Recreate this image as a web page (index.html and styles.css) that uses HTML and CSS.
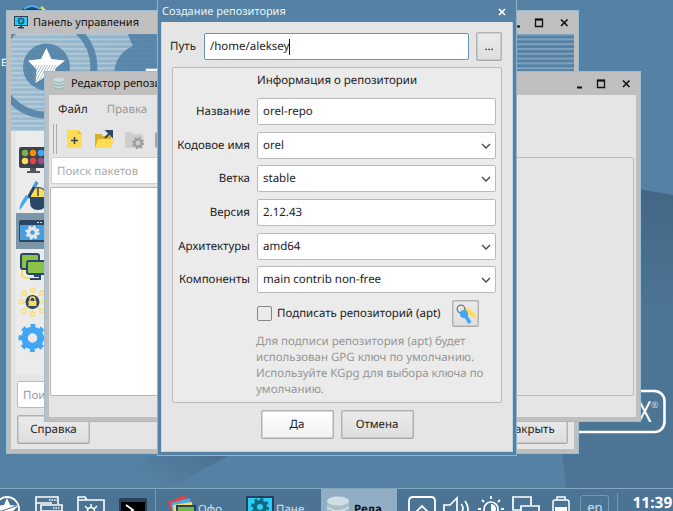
FILE: index.html
```html
<!DOCTYPE html>
<html lang="ru">
<head>
<meta charset="utf-8">
<title>Создание репозитория</title>
<link rel="stylesheet" href="styles.css">
</head>
<body>
<main class="desktop">
  <svg class="wallpaper" viewBox="0 0 673 511">
    <defs>
      <linearGradient id="shade" x1="0" y1="0" x2="0" y2="1"><stop offset="0" stop-color="#426483"/><stop offset=".45" stop-color="#4d7696"/><stop offset="1" stop-color="#4c7495"/></linearGradient>
      <linearGradient id="ray" x1="1" y1="0" x2="0.2" y2="0.3"><stop offset="0" stop-color="#4a7090"/><stop offset="1" stop-color="#5582a4"/></linearGradient>
    </defs>
    <path d="M520 168L673 195V511H569L556 400z" fill="url(#shade)"/>
    <path d="M228 456L170 488H100L150 456z" fill="url(#ray)"/>
    <rect x="480" y="391" width="184.500" height="41" rx="10" fill="none" stroke="#fff" stroke-width="2.600"/>
    <circle cx="32" cy="22" r="16" fill="#28415f"/>
    <path d="M24 9q8-6 16 0" fill="none" stroke="#4fb0f0" stroke-width="2"/>
    <path d="M41 7l4 4" stroke="#e8d25a" stroke-width="3"/>
  </svg>
  <span class="desk-label">Е</span>
  <span class="brand">X</span><span class="brand-mark">®</span>

  <section class="window panel">
    <header class="titlebar">
      <svg class="title-icon" viewBox="0 0 14 13"><path d="M0 0h14v10H0z" fill="#29405b"/><path d="M1 1h12v8H1z" fill="#29cdf5"/><circle cx="7" cy="5" r="2.300" fill="none" stroke="#17647e" stroke-width="1.600"/><path d="M7 1v2M7 7v2M3 5h2M9 5h2M4 2l1.500 1.500M8.500 6.500L10 8M10 2L8.500 3.500M5.500 6.500L4 8" stroke="#17647e"/><path d="M6 10h2v1h2v1.500H4V11h2z" fill="#29405b"/></svg>
      <span>Панель управления</span>
      <svg class="controls" viewBox="0 0 58 12"><path d="M2 9.500h5" stroke="#111" stroke-width="2"/><path d="M22.500 2.500h7v7h-7z" fill="none" stroke="#111" stroke-width="1.300"/><path d="M22 2.500h8" stroke="#111" stroke-width="2"/><path d="M48 2.500l6.500 6.500M54.500 2.500L48 9" stroke="#111" stroke-width="1.600"/></svg>
    </header>
    <div class="client">
      <svg class="banner" viewBox="11 34 564 97" preserveAspectRatio="none">
        <defs>
          <pattern id="lines" width="6" height="4.800" patternUnits="userSpaceOnUse"><path d="M0 1h6" stroke="#fff" stroke-opacity=".3" stroke-width="1.600"/></pattern>
          <pattern id="hatch" width="2.400" height="6" patternUnits="userSpaceOnUse" patternTransform="rotate(28)"><path d="M0 0v6" stroke="#6d94b0" stroke-width="1"/></pattern>
          <linearGradient id="sky"><stop offset="0" stop-color="#9cbbcf"/><stop offset=".28" stop-color="#8aaec6"/><stop offset=".7" stop-color="#5582a4"/></linearGradient>
        </defs>
        <path d="M11 34h564v97H11z" fill="url(#sky)"/>
        <path d="M11 34h564v97H11z" fill="url(#lines)"/>
        <circle cx="46" cy="67" r="48" fill="none" stroke="#4f7fa3" stroke-opacity=".85" stroke-width="7"/>
        <path d="M128 34h45v45H115Q112 56 133 46z" fill="#4f7fa3" fill-opacity=".85"/>
        <circle cx="46.500" cy="67" r="23.500" fill="#4f7fa3" fill-opacity=".85"/>
        <path d="M46.500 48l5 11 13.500 1.500-10 8.500 3 13-11.500-6-11 7 1-13.500-8.500-9L41 59z" fill="#fff"/>
        <path d="M32 65h26v17H34z" fill="url(#hatch)"/>
        <path d="M146 68.700h14v5h-14z" fill="#fff"/>
      </svg>
      <div class="sidebar">
        <div class="side-item"><svg viewBox="0 0 30 30"><rect x="1" y="2" width="30" height="21" rx="2" fill="#3c4350"/><path d="M12 23h6v3h4v2H9v-2h3z" fill="#55565a"/><circle cx="7" cy="8" r="3.200" fill="#7cb342"/><circle cx="15" cy="8" r="3.200" fill="#fb8c00"/><circle cx="23" cy="8" r="3.200" fill="#42a5f5"/><circle cx="7" cy="16" r="3.200" fill="#ffdc52"/><circle cx="15" cy="16" r="3.200" fill="#e24444"/><circle cx="23" cy="16" r="3.200" fill="#9b4f85"/></svg></div>
        <div class="side-item"><svg viewBox="0 0 30 30"><path d="M12 14q0-8 8-8t8 8v7q0 8-8 8t-8-8z" fill="#2b4767"/><path d="M13 14q0-7 7-7t7 7v2H13z" fill="#ffdc52"/><path d="M20 7v8" stroke="#2b4767" stroke-width="1.500"/><path d="M19 1L10 17" stroke="#2b4767" stroke-width="3"/><path d="M19 1l-3 5" stroke="#42a5f5" stroke-width="2.500"/><path d="M11 16L2 29q-2-4 6-15z" fill="#42a5f5"/></svg></div>
        <div class="side-item selected"><svg viewBox="0 0 30 30"><rect x="1" y="4" width="30" height="22" rx="1.500" fill="#2b4767"/><path d="M2 9h29v15H2z" fill="#479fdc"/><path d="M19 6.500h2M22 6.500h2" stroke="#ddd"/><path d="M26 6.500h2" stroke="#e34"/><circle cx="14.500" cy="16.500" r="4" fill="none" stroke="#e4e8eb" stroke-width="3.400"/><circle cx="14.500" cy="16.500" r="6" fill="none" stroke="#e4e8eb" stroke-width="2.400" stroke-dasharray="2.350 2.360"/></svg></div>
        <div class="side-item"><svg viewBox="0 0 30 30"><path d="M4 17v7q0 2 8 2" fill="none" stroke="#ffdc52" stroke-width="2"/><rect x="3" y="2" width="18" height="15" rx="2" fill="#8bc34a" stroke="#2b4767" stroke-width="2"/><rect x="9" y="9" width="23" height="13" rx="2" fill="#8bc34a" stroke="#2b4767" stroke-width="2"/><path d="M16 24h6v3H12" stroke="#2b4767" stroke-width="2" fill="none"/></svg></div>
        <div class="side-item"><svg viewBox="0 0 30 30"><path d="M14.500 4v22M3 15h22M6 6l17 18M23 6L6 24" stroke="#ffdc6a" stroke-width="1.300"/><g fill="#eee" stroke="#ffdc6a" stroke-width="1.300"><circle cx="14.500" cy="3" r="2"/><circle cx="14.500" cy="27" r="2"/><circle cx="3" cy="15" r="2"/><circle cx="26" cy="15" r="2"/><circle cx="6" cy="6" r="2"/><circle cx="24" cy="6" r="2"/><circle cx="6" cy="24" r="2"/><circle cx="24" cy="24" r="2"/></g><circle cx="14.500" cy="15" r="7" fill="#2b4767"/><path d="M10.500 14h8v5h-8z" fill="#ffdc52"/><path d="M12 14v-1.500a2.500 2.500 0 0 1 5 0V14" fill="none" stroke="#ffdc52" stroke-width="1.300"/></svg></div>
        <div class="side-item"><svg viewBox="0 0 30 30"><circle cx="14.500" cy="15" r="8" fill="none" stroke="#42a5f5" stroke-width="6.500"/><circle cx="14.500" cy="15" r="12" fill="none" stroke="#42a5f5" stroke-width="4" stroke-dasharray="4.700 4.725" stroke-dashoffset="2.350"/></svg></div>
      </div>
      <div class="search">Поиск</div>
      <footer class="panel-actions"><span class="button">Справка</span><span class="button">Закрыть</span></footer>
    </div>
  </section>

  <section class="window editor">
    <header class="titlebar">
      <svg class="title-icon" viewBox="0 0 14 14"><path d="M1 3v9q6 3.500 12 0V3z" fill="#a9bdbf"/><ellipse cx="7" cy="3" rx="6" ry="2.200" fill="#cfdcdd"/><path d="M1 6q6 3.500 12 0M1 9.500q6 3.500 12 0" fill="none" stroke="#d6e2e2"/></svg>
      <span>Редактор репозиториев</span>
      <svg class="controls" viewBox="0 0 58 12"><path d="M2 9.500h5" stroke="#111" stroke-width="2"/><path d="M22.500 2.500h7v7h-7z" fill="none" stroke="#111" stroke-width="1.300"/><path d="M22 2.500h8" stroke="#111" stroke-width="2"/><path d="M48 2.500l6.500 6.500M54.500 2.500L48 9" stroke="#111" stroke-width="1.600"/></svg>
    </header>
    <div class="client">
      <nav class="menu"><span>Файл</span><span class="muted">Правка</span></nav>
      <div class="toolbar">
        <i class="grip"></i>
        <svg viewBox="0 0 20 20"><path d="M3 1h11l4 4v14H3z" fill="#ffdc52"/><path d="M14 1v4h4z" fill="#e4c341"/><path d="M10.500 8v7M7 11.500h7" stroke="#2b4767" stroke-width="1.600"/></svg>
        <svg viewBox="0 0 20 20"><path d="M1 5h6l2 2h8v12H1z" fill="#d8b02f"/><path d="M4 10h16l-3 9H1z" fill="#ffdc52"/><path d="M11 9l5-5M13 2h5v5z" fill="#2b4767" stroke="#2b4767" stroke-width="2"/></svg>
        <svg viewBox="0 0 20 20"><path d="M1 3h6l2 2h10v14H1z" fill="#cfcfcf"/><circle cx="14" cy="14" r="3.500" fill="none" stroke="#9c9c9c" stroke-width="2.200"/><circle cx="14" cy="14" r="5.200" fill="none" stroke="#9c9c9c" stroke-width="2" stroke-dasharray="2 2.080"/></svg>
        <svg viewBox="0 0 20 20"><rect x="1" y="3" width="17" height="16" rx="2" fill="#a5a5a5"/></svg>
      </div>
      <div class="panes">
        <div class="packages"><div class="search">Поиск пакетов</div><div class="list"></div></div>
        <div class="details"></div>
      </div>
    </div>
  </section>

  <section class="dialog">
    <header class="dialog-title"><span>Создание репозитория</span><svg viewBox="0 0 8 8"><path d="M1 1l6 6M7 1L1 7" stroke="#fff" stroke-width="1.700"/></svg></header>
    <div class="dialog-body">
      <div class="path-row"><span>Путь</span><div class="field focused">/home/aleksey<i class="caret"></i></div><span class="button browse">...</span></div>
      <div class="group">
        <div class="group-title">Информация о репозитории</div>
        <div class="form">
          <span>Название</span><div class="field">orel-repo</div>
          <span>Кодовое имя</span><div class="field">orel<svg class="arrow" viewBox="0 0 10 6"><path d="M1 1l4 4 4-4" /></svg></div>
          <span>Ветка</span><div class="field">stable<svg class="arrow" viewBox="0 0 10 6"><path d="M1 1l4 4 4-4" /></svg></div>
          <span>Версия</span><div class="field">2.12.43</div>
          <span>Архитектуры</span><div class="field">amd64<svg class="arrow" viewBox="0 0 10 6"><path d="M1 1l4 4 4-4" /></svg></div>
          <span>Компоненты</span><div class="field">main contrib non-free<svg class="arrow" viewBox="0 0 10 6"><path d="M1 1l4 4 4-4" /></svg></div>
        </div>
        <div class="sign-row"><i class="checkbox"></i><span class="sign-label">Подписать репозиторий (apt)</span><span class="button key"><svg viewBox="0 0 20 20"><path d="M8 5q4-4 6 1l6 5-1 3-2-1-6-4z" fill="#ffdc52"/><circle cx="5" cy="5" r="3.800" fill="none" stroke="#647b8e" stroke-width="1.300"/><circle cx="8" cy="10" r="4" fill="#42a5f5"/><path d="M9 11l5 8" stroke="#42a5f5" stroke-width="3.500"/></svg></span></div>
        <p class="hint">Для подписи репозитория (apt) будет<br>использован GPG ключ по умолчанию.<br>Используйте KGpg для выбора ключа по<br>умолчанию.</p>
      </div>
      <footer class="actions"><span class="button primary">Да</span><span class="button">Отмена</span></footer>
    </div>
  </section>

  <footer class="taskbar">
    <div class="launchers">
      <svg viewBox="0 0 28 28"><circle cx="14" cy="14" r="12" fill="none" stroke="#fff" stroke-width="1.800"/><path d="M14 3l3 7 8 1-6 6 1 8-6-4-6 4 1-8-6-6 8-1z" fill="#fff"/><path d="M3 18L23 11" stroke="#4b7393"/></svg>
      <svg viewBox="0 0 28 28"><path d="M1 28V2h22v7M1 8h16M6 28V10h21v18M6 16h21" fill="none" stroke="#fff" stroke-width="1.600"/><path d="M14 5h8M18 13h7" stroke="#fff" stroke-width="1.500" stroke-dasharray="1.500 1"/></svg>
      <svg viewBox="0 0 28 28"><path d="M1 28V2h7l2 3h17v23M1 5h9" fill="none" stroke="#fff" stroke-width="1.600"/><circle cx="14" cy="16" r="3.500" fill="none" stroke="#fff" stroke-width="1.600"/><path d="M14 9v3M8 11l3 3M20 11l-3 3" stroke="#fff" stroke-width="1.500"/></svg>
      <svg viewBox="0 0 28 28"><rect y="3" width="28" height="27" rx="2" fill="#29405b"/><path d="M2 7h24v21H2z" fill="#000"/><path d="M7 10l7 5-7 5" fill="none" stroke="#fff" stroke-width="1.800"/></svg>
    </div>
    <div class="tasks">
      <div class="task"><svg viewBox="0 0 28 28"><path d="M0 7L17 0l8 22L7 28z" fill="#e34242"/><path d="M3 8L22 3l4 25H7z" fill="#46aaf3"/><path d="M5 10l19-3 2 21H7z" fill="#f6df58"/><path d="M9 11h18v18H9z" fill="#70b945" stroke="#29405b" stroke-width="2"/></svg><span>Офо</span></div>
      <div class="task"><svg viewBox="0 0 28 28"><path d="M1 2h26v27H1z" fill="#29cdf5" stroke="#29405b" stroke-width="2"/><circle cx="14" cy="12" r="5" fill="none" stroke="#126781" stroke-width="4"/><circle cx="14" cy="12" r="7.500" fill="none" stroke="#126781" stroke-width="3" stroke-dasharray="2.950 2.940"/></svg><span>Пане</span></div>
      <div class="task active"><svg viewBox="0 0 28 28"><path d="M3 6v22h22V6z" fill="#a9c0c9"/><ellipse cx="14" cy="6" rx="11" ry="4.500" fill="#d0dfe5"/><path d="M3 12q11 8 22 0M3 20q11 8 22 0" stroke="#d8e5e9" stroke-width="1.500" fill="none"/></svg><span>Реда</span></div>
    </div>
    <div class="tray">
      <svg viewBox="0 0 28 28"><path d="M1 28V6q0-4 4-4h18q4 0 4 4v22M8 17l6-6 6 6" fill="none" stroke="#fff" stroke-width="1.800"/></svg>
      <svg viewBox="0 0 28 28"><path d="M1 10h6l7-7v22l-7-6H1zM18 9q4 4 0 9M22 6q6 8 0 16" fill="none" stroke="#fff" stroke-width="1.700"/></svg>
      <svg viewBox="0 0 28 28"><circle cx="14" cy="14" r="7" fill="none" stroke="#fff" stroke-width="1.700"/><path d="M14 9a5 5 0 0 1 0 10z" fill="#fff"/><path d="M14 1v3M5 5l2 2M23 5l-2 2M1 14h3M24 14h3M5 23l2-2M23 23l-2-2" stroke="#fff" stroke-width="1.800"/></svg>
      <svg viewBox="0 0 28 28"><path d="M9 15H1V2h18v8M9 11h18v13H9zM4 20h5" fill="none" stroke="#fff" stroke-width="1.700"/></svg>
      <svg class="battery" viewBox="0 0 18 28"><path d="M1 28V7q0-2 2-2h12q2 0 2 2v21M5 5V2h8v3" fill="none" stroke="#fff" stroke-width="1.500"/><path d="M3 12h12v16H3z" fill="#fff"/></svg>
      <span class="lang">en</span>
    </div>
    <div class="clock">11:39</div>
  </footer>
</main>
</body>
</html>
```
FILE: styles.css
```css
* { box-sizing: border-box; }
body { margin: 0; font: 11.500px/16px "Noto Sans", "Open Sans", sans-serif; color: #222; text-rendering: geometricPrecision; }
svg { display: block; flex: none; }
.desktop { position: relative; width: 673px; height: 511px; overflow: hidden; background: #5582a4; }
.wallpaper { position: absolute; inset: 0; width: 673px; height: 511px; }
.desk-label { position: absolute; left: 1px; top: 54px; font-size: 10px; color: #fff; }
.brand { position: absolute; left: 638px; top: 397px; font: 29px/30px "Open Sans", sans-serif; color: #fff; transform: scaleX(.8); transform-origin: left; }
.brand-mark { position: absolute; left: 651px; top: 397px; font-size: 9px; color: #c5d4df; }

.window { position: absolute; display: flex; flex-direction: column; padding: 0 4px 4px; background: #bfbfbf; border: 1px solid #9dbdd3; }
.panel { left: 6px; top: 10px; width: 573px; height: 444px; }
.editor { left: 44px; top: 71px; width: 597px; height: 351px; }
.titlebar { display: flex; align-items: center; flex: none; height: 23px; padding: 0 3px 0 3px; gap: 5px; font-size: 11px; color: #111; white-space: nowrap; }
.title-icon { width: 14px; height: 13px; }
.titlebar span { padding-top: 1px; }
.controls { width: 58px; height: 12px; margin-left: auto; }
.client { flex: 1; min-height: 0; display: flex; flex-direction: column; background: #e5e5e5; }
.banner { width: 100%; height: 97px; }
.sidebar { width: 150px; height: 244px; margin: 0 0 6px 5px; padding-top: 11px; background: #ebebeb; }
.side-item { height: 35.500px; padding: 3px 0 0 2px; }
.side-item svg { width: 30px; height: 30px; }
.side-item.selected { background: #7c95a7; }
.search { height: 27px; padding: 6px 5px 0; background: #fff; border: 1px solid #bcbcbc; border-radius: 2px; color: #aaa; }
.panel .search { margin: 0 6px; color: #999; }
.panel-actions { display: flex; justify-content: space-between; padding: 7px 6px 0; }
.button { display: flex; align-items: center; justify-content: center; width: 73px; height: 29px; padding-top: 1px; border: 1px solid #b2b2b2; border-bottom-color: #a9a9a9; border-radius: 2px; background: linear-gradient(#ebebeb, #dedede); box-shadow: inset 0 0 0 .5px #b2b2b2; color: #222; }

.menu { display: flex; gap: 19px; padding: 7px 9px 0; height: 27px; }
.muted { color: #999; }
.toolbar { display: flex; align-items: center; height: 34px; margin-bottom: 1px; padding-left: 4px; gap: 10px; }
.toolbar svg { width: 20px; height: 20px; }
.grip { width: 4px; height: 30px; margin-right: -3px; border: solid #aaa; border-width: 0 1px; }
.panes { display: flex; height: 239px; gap: 4px; padding: 0 2px 0 1px; }
.packages { width: 286px; }
.packages .search { margin-left: 1px; border-color: #d0d0d0; }
.list { height: 209px; margin-top: 3px; background: #fff; border: 1px solid #b8b8b8; border-radius: 2px; }
.details { flex: 1; border: 1px solid #b8b8b8; border-radius: 2px; }

.dialog { position: absolute; left: 157px; top: -2px; width: 360px; height: 458px; padding: 0 3px; display: flex; flex-direction: column; background: #5582a4; border: 1px solid #8fb4d0; }
.dialog-title { display: flex; align-items: center; justify-content: space-between; height: 23px; flex: none; padding: 3px 7px 0 1px; font-size: 11px; color: #e9f3fa; }
.dialog-title svg { width: 8px; height: 8px; }
.dialog-body { height: 430px; padding: 10px 10px 0; background: #e5e5e5; border: 1px solid #c1d4e1; border-top: 0; }
.path-row { display: flex; align-items: center; height: 29px; }
.path-row > span:first-child { width: 34px; margin-left: -2px; padding-top: 1px; }
.path-row .field { width: 266px; margin-right: 7px; }
.field { display: flex; align-items: center; height: 27px; padding: 1px 0 0 5px; background: #fff; border: 1px solid #bababa; border-radius: 2px; color: #222; }
.field.focused { border-color: #6794b7; }
.caret { width: 1px; height: 16px; background: #111; }
.button.browse { width: 26px; }
.group { height: 336px; margin-top: 6px; padding: 5px 7px; background: #ebebeb; border: 1px solid #bababa; border-radius: 2px; }
.group-title { height: 25px; text-align: center; }
.form { display: grid; grid-template-columns: 72px 239px; grid-auto-rows: 27px; gap: 6.700px 7px; align-items: center; margin-left: -2px; white-space: nowrap; }
.form > span { justify-self: end; padding-top: 1px; }
.arrow { width: 10px; height: 6px; margin: 0 4px 0 auto; fill: none; stroke: #444; stroke-width: 1.300; }
.sign-row { display: flex; align-items: center; height: 27px; margin-top: 7px; padding-left: 77px; }
.checkbox { width: 15px; height: 15px; border: 1px solid #858585; border-radius: 2px; margin-right: 5px; }
.sign-label { width: 175px; padding-top: 1px; white-space: nowrap; }
.button.key { width: 27px; height: 27px; padding: 0; }
.key svg { width: 20px; height: 20px; }
.hint { margin: 7px 0 0 76px; line-height: 16px; color: #969696; white-space: nowrap; }
.actions { display: flex; justify-content: center; gap: 7px; margin-top: 7px; }
.button.primary { background: linear-gradient(#fff, #f1f1f1); }

.taskbar { position: absolute; left: 0; top: 488px; width: 673px; height: 40px; display: flex; background: #4b7393; border-top: 1px solid #83a7c1; color: #d4e2ec; }
.taskbar svg { width: 28px; height: 28px; margin-top: 6px; }
.launchers { display: flex; gap: 14px; width: 155px; margin-left: -7px; }
.tasks { display: flex; flex: none; border-left: 1px solid #7597b0; margin-left: 7px; margin-right: 11px; }
.task { display: flex; width: 78px; padding-left: 12px; gap: 2px; }
.task + .task { width: 87px; padding-left: 12px; }
.task span { padding-top: 13px; }
.task.active, .task + .task.active { width: 76px; padding-left: 3px; background: #91aec4; color: #111; font-weight: bold; }
.tray { display: flex; gap: 6.700px; }
.tray .battery { width: 18px; margin-left: 5px; }
.lang { width: 29px; height: 27px; margin: 6px 0 0 4px; border: 1px solid #7597b0; border-radius: 3px; text-align: center; padding-top: 3px; font-size: 13px; }
.clock { margin: 4px 0 0 8px; padding: 0 0 0 14px; border-left: 1px solid #7597b0; font-size: 15.500px; line-height: 18px; font-weight: bold; color: #fff; }
```
